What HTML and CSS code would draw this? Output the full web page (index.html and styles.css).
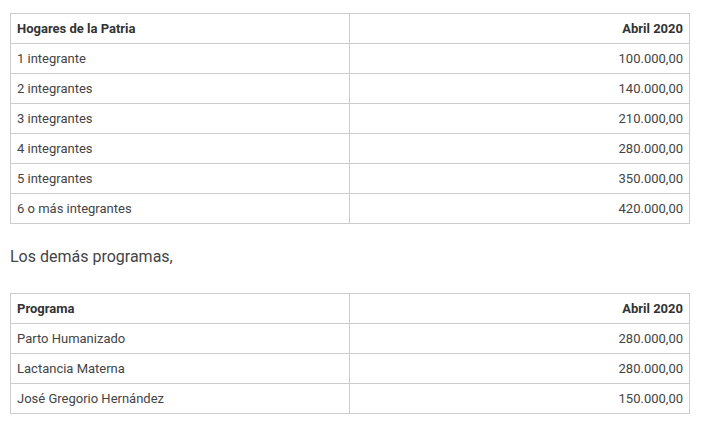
FILE: index.html
```html
<!DOCTYPE html>
<html lang="es">
<head>
<meta charset="utf-8">
<link rel="stylesheet" href="styles.css">
</head>
<body>
<div class="content">
  <table class="data">
    <colgroup><col class="c1"><col class="c2"></colgroup>
    <thead>
      <tr><th>Hogares de la Patria</th><th class="num">Abril 2020</th></tr>
    </thead>
    <tbody>
      <tr><td>1 integrante</td><td class="num">100.000,00</td></tr>
      <tr><td>2 integrantes</td><td class="num">140.000,00</td></tr>
      <tr><td>3 integrantes</td><td class="num">210.000,00</td></tr>
      <tr><td>4 integrantes</td><td class="num">280.000,00</td></tr>
      <tr><td>5 integrantes</td><td class="num">350.000,00</td></tr>
      <tr><td>6 o más integrantes</td><td class="num">420.000,00</td></tr>
    </tbody>
  </table>
  <p class="lead">Los demás programas,</p>
  <table class="data">
    <colgroup><col class="c1"><col class="c2"></colgroup>
    <thead>
      <tr><th>Programa</th><th class="num">Abril 2020</th></tr>
    </thead>
    <tbody>
      <tr><td>Parto Humanizado</td><td class="num">280.000,00</td></tr>
      <tr><td>Lactancia Materna</td><td class="num">280.000,00</td></tr>
      <tr><td>José Gregorio Hernández</td><td class="num">150.000,00</td></tr>
    </tbody>
  </table>
</div>
</body>
</html>
```
FILE: styles.css
```css
html, body {
  margin: 0;
  padding: 0;
  background: #fff;
}
.content {
  padding: 13px 11px 0 10px;
  font-family: Roboto, "Liberation Sans", sans-serif;
  color: #444;
}
.data {
  width: 680px;
  border-collapse: collapse;
  table-layout: fixed;
  font-size: 13px;
  line-height: 17px;
}
.data .c1 {
  width: 339px;
}
.data th,
.data td {
  border: 1px solid #ccc;
  padding: 6px 6px;
  text-align: left;
  color: #444;
}
.data th {
  font-weight: 700;
  color: #333;
}
.data .num {
  text-align: right;
}
.lead {
  margin: 21px 0 24px;
  font-size: 16px;
  line-height: 24px;
  color: #444;
}
```
